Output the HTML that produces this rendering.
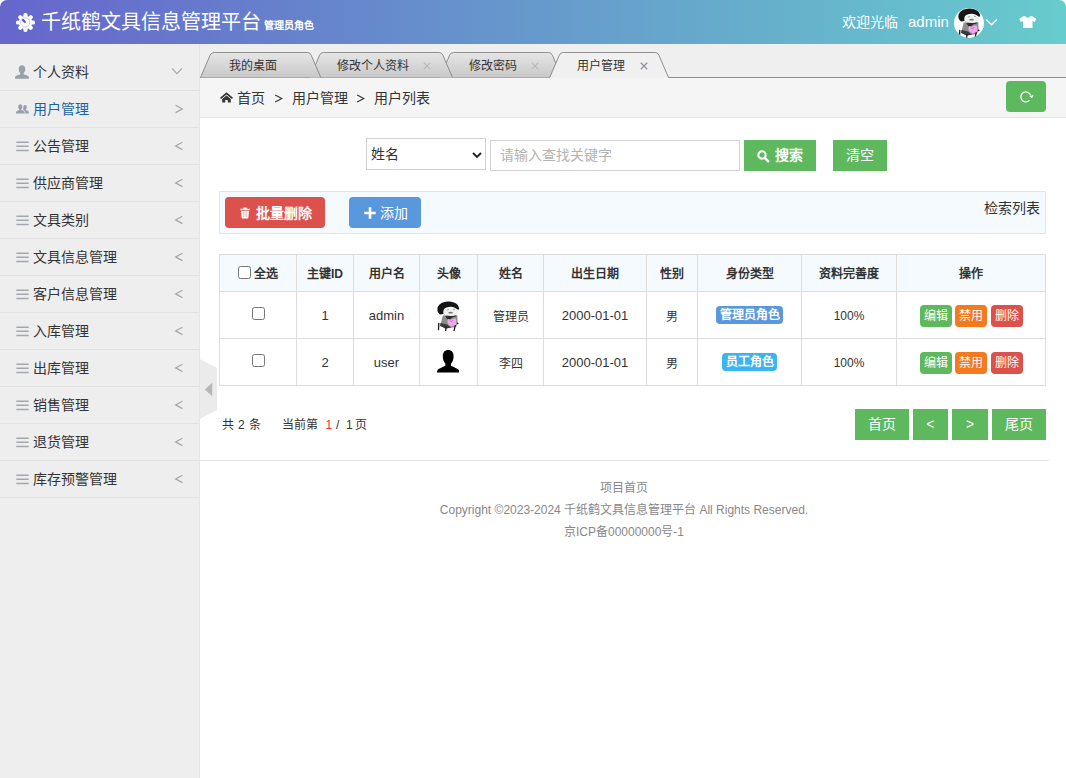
<!DOCTYPE html>
<html lang="zh-CN">
<head>
<meta charset="utf-8">
<title>千纸鹤文具信息管理平台</title>
<style>
*{box-sizing:border-box;margin:0;padding:0}
html,body{width:1066px;height:778px;overflow:hidden;background:#fff}
body{font-family:"Liberation Sans",sans-serif;font-size:14px;color:#333;position:relative}
.abs{position:absolute}
#win{position:absolute;left:0;top:0;width:1066px;height:778px;border-radius:7px 7px 0 0;overflow:hidden;background:#fff}
#hdr{position:absolute;left:0;top:0;width:1066px;height:44px;background:linear-gradient(90deg,#6666cc 0%,#66cccc 100%);color:#fff}
#title{position:absolute;left:41px;top:9px;font-family:"Liberation Serif",serif;font-size:20px;line-height:26px;white-space:nowrap;color:#fff}
#role{position:absolute;left:264px;top:19px;font-size:10px;line-height:14px;font-weight:bold;white-space:nowrap}
#welcome{position:absolute;left:842px;top:12px;font-size:14px;line-height:20px;white-space:nowrap}
#uname{position:absolute;left:908px;top:12px;font-size:15px;line-height:20px;white-space:nowrap}
#side{position:absolute;left:0;top:44px;width:200px;height:734px;background:#eee;border-right:1px solid #e5e5e5}
#menu{position:absolute;left:0;top:10px;width:199px;list-style:none}
#menu li{height:37px;border-bottom:1px solid #e2e2e2;position:relative;font-size:14px;line-height:36px;padding-left:33px;color:#333;white-space:nowrap}
#menu li.on{color:#1562ab}
#menu li .ic{position:absolute}
#main{position:absolute;left:200px;top:44px;width:866px;height:734px;background:#fff}
#tabbar{position:absolute;left:0;top:0;width:866px;height:34px;background:#efeff0}
#crumb{position:absolute;left:0;top:34px;width:866px;height:40px;background:#f5f5f5;border-bottom:1px solid #e5e5e5;font-size:14px;line-height:40px;white-space:nowrap}
.tabtxt{position:absolute;top:14px;font-size:12px;line-height:16px;color:#333;white-space:nowrap}
.btn{position:absolute;color:#fff;text-align:center;white-space:nowrap}
.g{background:#5eb95e}
table{border-collapse:collapse;position:absolute;left:19px;top:210px;width:826px;table-layout:fixed;font-size:12px;color:#333}
th,td{border:1px solid #ddd;text-align:center;vertical-align:middle;padding:0}
th{height:37px;background:#f5fafe;font-weight:bold;padding-bottom:1px}
td{height:47px}
.lbl{display:inline-block;color:#fff;font-weight:bold;font-size:12px;line-height:18px;height:18px;padding:0 3.6px;border-radius:4px;position:relative;top:0}
.ob{display:inline-block;color:#fff;font-size:12px;line-height:22px;width:32px;height:22px;border-radius:4px;margin:1px 0 0 0}
.ob+.ob{margin-left:3px}
.ob+.ob+.ob{margin-left:4px}
.cb{display:inline-block;width:13px;height:13px;border:1px solid #767676;border-radius:2.5px;background:#fff;vertical-align:middle}
.ft{position:absolute;left:0;width:848px;text-align:center;font-size:12px;color:#888;line-height:18px;white-space:nowrap}
.pg{position:absolute;top:371.5px;font-size:12px;line-height:18px;white-space:nowrap;color:#333}
</style>
</head>
<body>
<div id="win">
<svg width="0" height="0" style="position:absolute"><defs>
    <symbol id="av" viewBox="0 0 30 30">
      <rect width="30" height="30" fill="#fff"/>
      <path d="M9.8 14.6 L24.3 14.3 L24.6 22 L23 26 L12 27.5 L7.4 24 Z" fill="#8c8c8c"/>
      <path d="M7.5 22 L14 23.5 L18 26.8 L12.5 27.5 L7 25Z" fill="#3a3a3a"/>
      <path d="M12 15 L15.5 19.5 L19 16.5 L22.5 15.5 L23.5 14.5 L12 14.5Z" fill="#2a2a2a"/>
      <path d="M14.5 18.8 Q15.5 17 17.5 19 Q19.5 16.8 23 17.6 L23.5 23 Q20 26.5 16.2 24.5 Q13.8 22 14.5 18.8Z" fill="#f2a6ee"/>
      <path d="M17 19.5 l1.5 1.5 l1.6 -1.8" stroke="#a060a8" stroke-width=".7" fill="none"/>
      <ellipse cx="18" cy="10.6" rx="7.2" ry="4.3" fill="#f1f1f1"/>
      <path d="M10.5 12.5 Q13 15.5 19 14.8 L12 15.2Z" fill="#bbb"/>
      <path d="M14.8 .6 C22 .2 26.3 4 26.2 8.5 L24.4 8.6 C22 6.5 19.5 5.6 17.6 5.8 C14.5 6 12 7 10.9 8.3 C10.2 10 10.3 11.5 10.5 12.9 L7 13.5 C5 12 4.2 10 4.4 8 C4.8 3.5 9 .9 14.8 .6Z" fill="#151515"/>
      <ellipse cx="17.6" cy="11.7" rx="2.3" ry=".9" fill="#777"/>
      <path d="M13.8 9.2 l2.2 -.8 M20 8.3 l2 .3" stroke="#888" stroke-width=".7"/>
      <path d="M5.8 22.4 L5.5 28.6 M13.1 26.4 L12.6 29.8 M22.2 24.7 L21 29.8" stroke="#1a1a1a" stroke-width="1.3" stroke-linecap="round"/>
      <circle cx="24.6" cy="22.4" r=".9" fill="#222"/>
    </symbol>
</defs></svg>
<div id="hdr">
  <svg class="abs" style="left:15.7px;top:13px" width="19" height="19" viewBox="0 0 19 19">
    <g fill="#fff">
      <circle cx="9.5" cy="9.5" r="6.6"/>
      <rect x="7.4" y="0" width="4.2" height="19" rx="1.9"/>
      <rect x="7.4" y="0" width="4.2" height="19" rx="1.9" transform="rotate(45 9.5 9.5)"/>
      <rect x="7.4" y="0" width="4.2" height="19" rx="1.9" transform="rotate(90 9.5 9.5)"/>
      <rect x="7.4" y="0" width="4.2" height="19" rx="1.9" transform="rotate(135 9.5 9.5)"/>
    </g>
    <circle cx="9.2" cy="9.4" r="4.6" fill="none" stroke="#9a9ac8" stroke-width=".5"/>
    <path d="M7 7 L8.7 8.8" stroke="#5c5cc0" stroke-width="2.4" stroke-linecap="round"/>
  </svg>
  <div id="title">千纸鹤文具信息管理平台</div>
  <div id="role">管理员角色</div>
  <div id="welcome">欢迎光临</div>
  <div id="uname">admin</div>
  <svg class="abs" style="left:954px;top:8px" width="30" height="30" viewBox="0 0 30 30">
    <defs><clipPath id="c1"><circle cx="15" cy="15" r="15"/></clipPath></defs>
    <g clip-path="url(#c1)"><use href="#av" width="30" height="30"/></g>
  </svg>
  <svg class="abs" style="left:985px;top:17.5px" width="13" height="9" viewBox="0 0 13 9"><path d="M1.2 1.5 L6.5 6.8 L11.8 1.5" fill="none" stroke="#fff" stroke-width="1.5"/></svg>
  <svg class="abs" style="left:1018.5px;top:15.7px" width="17.5" height="12.5" viewBox="0 0 17.5 12.5"><path d="M4.2 .2 L6.4 .2 Q8.75 3.2 11.1 .2 L13.3 .2 L17.3 3 L15.7 6 L13.5 5 L13.5 12.3 L4 12.3 L4 5 L1.8 6 L.2 3 Z" fill="#fff"/></svg>
</div>

<div id="side">
  <ul id="menu">
    <li><svg class="ic" style="left:15px;top:10.5px" width="14" height="14" viewBox="0 0 14 14"><path d="M7 .2 C9 .2 10.3 1.7 10.3 4 C10.3 6 9.5 7.5 8.6 8.2 L8.6 9.2 C10.5 9.9 13.2 10.6 13.8 11.8 Q14 12.5 14 13.7 L0 13.7 Q0 12.5 .2 11.8 C.8 10.6 3.5 9.9 5.4 9.2 L5.4 8.2 C4.5 7.5 3.7 6 3.7 4 C3.7 1.7 5 .2 7 .2Z" fill="#9aa0ab"/></svg>个人资料<svg class="abs" style="left:171px;top:13px" width="12" height="9" viewBox="0 0 12 9"><path d="M1 1.4 L6 6.6 L11 1.4" fill="none" stroke="#a4a8ae" stroke-width="1.2"/></svg></li>
    <li class="on"><svg class="ic" style="left:15.5px;top:12.5px" width="13" height="10" viewBox="0 0 13 10"><path d="M4.3 .3 C5.6 .3 6.4 1.3 6.4 2.8 C6.4 4 5.9 5 5.3 5.5 L5.3 6.1 C6.5 6.5 8.2 7 8.5 7.8 Q8.7 8.5 8.7 9.5 L0 9.5 Q0 8.5 .2 7.8 C.5 7 2.1 6.5 3.3 6.1 L3.3 5.5 C2.7 5 2.2 4 2.2 2.8 C2.2 1.3 3 .3 4.3 .3Z" fill="#9aa0ab"/><path d="M9 .9 C10.1 .9 10.8 1.8 10.8 3 C10.8 4.1 10.4 4.9 9.9 5.4 L9.9 5.9 C10.9 6.3 12.4 6.7 12.7 7.5 Q12.9 8.2 12.9 9.5 L9.3 9.5 Q9.3 8 9 7.4 C8.7 6.8 7.6 6.3 7 6 C7.3 5.3 7.4 4.5 7.3 3.5 C7.2 2 7.8 .9 9 .9Z" fill="#9aa0ab"/></svg>用户管理<svg class="abs" style="left:174px;top:13px" width="10" height="10" viewBox="0 0 10 10"><path d="M1.6 1.2 L8.4 4.9 L1.6 8.6" fill="none" stroke="#a4a8ae" stroke-width="1.2"/></svg></li>
    <li><svg class="ic" style="left:15.5px;top:12.5px" width="13" height="11" viewBox="0 0 13 11"><path d="M.3 1.2h12.4M.3 5.3h12.4M.3 9.5h12.4" stroke="#a3a8b0" stroke-width="1.5"/></svg>公告管理<svg class="abs" style="left:174px;top:13px" width="10" height="10" viewBox="0 0 10 10"><path d="M8.4 1.2 L1.6 4.9 L8.4 8.6" fill="none" stroke="#a4a8ae" stroke-width="1.2"/></svg></li>
    <li><svg class="ic" style="left:15.5px;top:12.5px" width="13" height="11" viewBox="0 0 13 11"><path d="M.3 1.2h12.4M.3 5.3h12.4M.3 9.5h12.4" stroke="#a3a8b0" stroke-width="1.5"/></svg>供应商管理<svg class="abs" style="left:174px;top:13px" width="10" height="10" viewBox="0 0 10 10"><path d="M8.4 1.2 L1.6 4.9 L8.4 8.6" fill="none" stroke="#a4a8ae" stroke-width="1.2"/></svg></li>
    <li><svg class="ic" style="left:15.5px;top:12.5px" width="13" height="11" viewBox="0 0 13 11"><path d="M.3 1.2h12.4M.3 5.3h12.4M.3 9.5h12.4" stroke="#a3a8b0" stroke-width="1.5"/></svg>文具类别<svg class="abs" style="left:174px;top:13px" width="10" height="10" viewBox="0 0 10 10"><path d="M8.4 1.2 L1.6 4.9 L8.4 8.6" fill="none" stroke="#a4a8ae" stroke-width="1.2"/></svg></li>
    <li><svg class="ic" style="left:15.5px;top:12.5px" width="13" height="11" viewBox="0 0 13 11"><path d="M.3 1.2h12.4M.3 5.3h12.4M.3 9.5h12.4" stroke="#a3a8b0" stroke-width="1.5"/></svg>文具信息管理<svg class="abs" style="left:174px;top:13px" width="10" height="10" viewBox="0 0 10 10"><path d="M8.4 1.2 L1.6 4.9 L8.4 8.6" fill="none" stroke="#a4a8ae" stroke-width="1.2"/></svg></li>
    <li><svg class="ic" style="left:15.5px;top:12.5px" width="13" height="11" viewBox="0 0 13 11"><path d="M.3 1.2h12.4M.3 5.3h12.4M.3 9.5h12.4" stroke="#a3a8b0" stroke-width="1.5"/></svg>客户信息管理<svg class="abs" style="left:174px;top:13px" width="10" height="10" viewBox="0 0 10 10"><path d="M8.4 1.2 L1.6 4.9 L8.4 8.6" fill="none" stroke="#a4a8ae" stroke-width="1.2"/></svg></li>
    <li><svg class="ic" style="left:15.5px;top:12.5px" width="13" height="11" viewBox="0 0 13 11"><path d="M.3 1.2h12.4M.3 5.3h12.4M.3 9.5h12.4" stroke="#a3a8b0" stroke-width="1.5"/></svg>入库管理<svg class="abs" style="left:174px;top:13px" width="10" height="10" viewBox="0 0 10 10"><path d="M8.4 1.2 L1.6 4.9 L8.4 8.6" fill="none" stroke="#a4a8ae" stroke-width="1.2"/></svg></li>
    <li><svg class="ic" style="left:15.5px;top:12.5px" width="13" height="11" viewBox="0 0 13 11"><path d="M.3 1.2h12.4M.3 5.3h12.4M.3 9.5h12.4" stroke="#a3a8b0" stroke-width="1.5"/></svg>出库管理<svg class="abs" style="left:174px;top:13px" width="10" height="10" viewBox="0 0 10 10"><path d="M8.4 1.2 L1.6 4.9 L8.4 8.6" fill="none" stroke="#a4a8ae" stroke-width="1.2"/></svg></li>
    <li><svg class="ic" style="left:15.5px;top:12.5px" width="13" height="11" viewBox="0 0 13 11"><path d="M.3 1.2h12.4M.3 5.3h12.4M.3 9.5h12.4" stroke="#a3a8b0" stroke-width="1.5"/></svg>销售管理<svg class="abs" style="left:174px;top:13px" width="10" height="10" viewBox="0 0 10 10"><path d="M8.4 1.2 L1.6 4.9 L8.4 8.6" fill="none" stroke="#a4a8ae" stroke-width="1.2"/></svg></li>
    <li><svg class="ic" style="left:15.5px;top:12.5px" width="13" height="11" viewBox="0 0 13 11"><path d="M.3 1.2h12.4M.3 5.3h12.4M.3 9.5h12.4" stroke="#a3a8b0" stroke-width="1.5"/></svg>退货管理<svg class="abs" style="left:174px;top:13px" width="10" height="10" viewBox="0 0 10 10"><path d="M8.4 1.2 L1.6 4.9 L8.4 8.6" fill="none" stroke="#a4a8ae" stroke-width="1.2"/></svg></li>
    <li><svg class="ic" style="left:15.5px;top:12.5px" width="13" height="11" viewBox="0 0 13 11"><path d="M.3 1.2h12.4M.3 5.3h12.4M.3 9.5h12.4" stroke="#a3a8b0" stroke-width="1.5"/></svg>库存预警管理<svg class="abs" style="left:174px;top:13px" width="10" height="10" viewBox="0 0 10 10"><path d="M8.4 1.2 L1.6 4.9 L8.4 8.6" fill="none" stroke="#a4a8ae" stroke-width="1.2"/></svg></li>
  </ul>
</div>

<div id="main">
  <div id="tabbar">
    <svg class="abs" style="left:0;top:0" width="866" height="35" viewBox="0 0 866 35">
      <defs>
        <linearGradient id="tg" x1="0" y1="0" x2="0" y2="1"><stop offset="0" stop-color="#e6e6e6"/><stop offset="1" stop-color="#c8c8c8"/></linearGradient>
      </defs>
      <path d="M0 33.5 H866" stroke="#8e8e8e" stroke-width="1"/>
      <path d="M240 33.5 L249.6 11.2 Q250.6 8.5 253.6 8.5 H348.4 Q351.4 8.5 352.4 11.2 L362 33.5" fill="url(#tg)" stroke="#8e8e8e"/>
      <path d="M110 33.5 L119.6 11.2 Q120.6 8.5 123.6 8.5 H238.9 Q241.9 8.5 242.9 11.2 L252.5 33.5" fill="url(#tg)" stroke="#8e8e8e"/>
      <path d="M0.5 33.5 L10.1 11.2 Q11.1 8.5 14.1 8.5 H107.2 Q110.2 8.5 111.2 11.2 L120.8 33.5" fill="url(#tg)" stroke="#8e8e8e"/>
      <path d="M349.7 34.2 L359.3 11.2 Q360.3 8.5 363.3 8.5 H454.9 Q457.9 8.5 458.9 11.2 L468.5 34.2Z" fill="#f0f0f0" stroke="none"/>
      <path d="M349.7 33.5 L359.3 11.2 Q360.3 8.5 363.3 8.5 H454.9 Q457.9 8.5 458.9 11.2 L468.5 33.5" fill="none" stroke="#8e8e8e"/>
    </svg>
    <div class="tabtxt" style="left:29px">我的桌面</div>
    <div class="tabtxt" style="left:137px">修改个人资料</div>
    <div class="tabtxt" style="left:269px">修改密码</div>
    <div class="tabtxt" style="left:377px">用户管理</div>
    <svg class="abs" style="left:223px;top:18px" width="8" height="8" viewBox="0 0 8 8"><path d="M.8 .8 L7.2 7.2 M7.2 .8 L.8 7.2" stroke="#b4b8be" stroke-width="1.1"/></svg>
    <svg class="abs" style="left:331px;top:18px" width="8" height="8" viewBox="0 0 8 8"><path d="M.8 .8 L7.2 7.2 M7.2 .8 L.8 7.2" stroke="#b4b8be" stroke-width="1.1"/></svg>
    <svg class="abs" style="left:439.5px;top:18px" width="8" height="8" viewBox="0 0 8 8"><path d="M.8 .8 L7.2 7.2 M7.2 .8 L.8 7.2" stroke="#8f949c" stroke-width="1.3"/></svg>
  </div>
  <div id="crumb">
    <svg class="abs" style="left:19.8px;top:14.4px" width="13" height="11" viewBox="0 0 13 11"><path d="M6.5 .2 L0 5.7 L1.1 7 L6.5 2.5 L11.9 7 L13 5.7Z" fill="#333"/><path d="M2.2 7.1 L6.5 3.6 L10.8 7.1 V10.6 H7.8 V7.9 H5.2 V10.6 H2.2Z" fill="#333"/></svg>
    <span class="abs" style="left:37px;top:0">首页</span>
    <svg class="abs" style="left:274px;top:0;left:74px" width="9" height="40" viewBox="0 0 9 40"><path d="M1.2 17 L7.8 20.5 L1.2 24" fill="none" stroke="#333" stroke-width="1.1"/></svg>
    <span class="abs" style="left:92px;top:0">用户管理</span>
    <svg class="abs" style="left:156px;top:0" width="9" height="40" viewBox="0 0 9 40"><path d="M1.2 17 L7.8 20.5 L1.2 24" fill="none" stroke="#333" stroke-width="1.1"/></svg>
    <span class="abs" style="left:174px;top:0">用户列表</span>
    <div class="btn g" style="left:806px;top:3px;width:40px;height:31px;border-radius:4px">
      <svg class="abs" style="left:12.5px;top:9px" width="15" height="14" viewBox="0 0 15 14"><path d="M10.4 10.4 A5 5 0 1 1 11.6 5.4" fill="none" stroke="#fff" stroke-width="1.3"/><path d="M10.3 6.3 L14.4 4.9 L13.1 8.2Z" fill="#fff"/></svg>
    </div>
  </div>

  <!-- search -->
  <div class="abs" style="left:166px;top:94px;width:120px;height:32px;border:1px solid #d3d3d3;background:#fff;font-size:14px;line-height:30px;padding-left:4px">姓名
    <svg class="abs" style="left:105px;top:12.5px" width="10" height="7" viewBox="0 0 10 7"><path d="M1 1 L5 5 L9 1" fill="none" stroke="#222" stroke-width="1.9"/></svg>
  </div>
  <div class="abs" style="left:290px;top:96px;width:250px;height:31px;border:1px solid #d3d3d3;background:#fff;font-size:14px;line-height:29px;padding-left:9px;color:#b3b3b3">请输入查找关键字</div>
  <div class="btn g" style="left:544px;top:96px;width:72px;height:31px;font-size:14px;line-height:31px;font-weight:bold;padding-left:17.5px">
    <svg class="abs" style="left:13.2px;top:9.6px" width="13" height="13" viewBox="0 0 13 13"><circle cx="5" cy="5" r="3.7" fill="none" stroke="#fff" stroke-width="2.1"/><path d="M7.8 7.8 L11.3 11.3" stroke="#fff" stroke-width="2.4" stroke-linecap="round"/></svg>搜索</div>
  <div class="btn g" style="left:633px;top:96px;width:54px;height:31px;font-size:14px;line-height:31px">清空</div>

  <!-- toolbar -->
  <div class="abs" style="left:19px;top:147px;width:827px;height:43px;background:#f5fafe;border:1px solid #e5e5e5"></div>
  <div class="btn" style="left:25px;top:153px;width:100px;height:31px;border-radius:4px;background:#dd514c;font-size:14px;line-height:32px;font-weight:bold;padding-left:18px">
    <svg class="abs" style="left:14.5px;top:10px" width="10" height="12" viewBox="0 0 10 12"><path d="M.3 1.8 H9.7 V3.2 H.3Z M3.2 .4 H6.8 V1.8 H3.2Z M1 3.9 H9 L8.4 10.6 Q8.3 11.6 7.3 11.6 H2.7 Q1.7 11.6 1.6 10.6Z" fill="#fff"/><path d="M3.5 5 V10 M5 5 V10 M6.5 5 V10" stroke="#dd514c" stroke-width=".45" opacity=".7"/></svg>批量删除</div>
  <div class="btn" style="left:149px;top:153px;width:72px;height:31px;border-radius:4px;background:#5a98de;font-size:14px;line-height:32px;padding-left:18px">
    <svg class="abs" style="left:14.5px;top:10px" width="12" height="12" viewBox="0 0 12 12"><path d="M6 .3 V11.7 M.3 6 H11.7" stroke="#fff" stroke-width="2.6"/></svg>添加</div>
  <div class="abs" style="left:784px;top:155px;font-size:14px;line-height:18px;white-space:nowrap;color:#333">检索列表</div>

  <table>
    <colgroup><col style="width:77px"><col style="width:57px"><col style="width:66px"><col style="width:58px"><col style="width:66px"><col style="width:103px"><col style="width:51px"><col style="width:104px"><col style="width:95px"><col style="width:149px"></colgroup>
    <tr><th><span class="cb" style="margin-right:3px;position:relative;top:-2px"></span>全选</th><th>主键ID</th><th>用户名</th><th>头像</th><th>姓名</th><th>出生日期</th><th>性别</th><th>身份类型</th><th>资料完善度</th><th>操作</th></tr>
    <tr><td><span class="cb" style="position:relative;top:-2px"></span></td><td style="font-size:13px">1</td><td style="font-size:13px">admin</td><td>
      <svg width="30" height="30" viewBox="0 0 30 30" style="display:block;margin:1px auto 0;position:relative;left:-.5px"><use href="#av" width="30" height="30"/></svg></td><td>管理员</td><td style="font-size:13px">2000-01-01</td><td>男</td><td><span class="lbl" style="background:#5a98de">管理员角色</span></td><td><span style="position:relative;top:1px">100%</span></td><td><span class="ob" style="background:#5eb95e">编辑</span><span class="ob" style="background:#f37b1d">禁用</span><span class="ob" style="background:#dd514c">删除</span></td></tr>
    <tr><td><span class="cb" style="position:relative;top:-2px"></span></td><td style="font-size:13px">2</td><td style="font-size:13px">user</td><td>
      <svg width="22.4" height="22.6" viewBox="0 0 22.4 22.6" style="display:block;margin:0 auto;position:relative;top:-.5px;left:-.5px"><path d="M11.2 0 C14.5 0 16.6 2.3 16.6 5.8 C16.6 7 16.5 8 16.3 9 C15.9 11.2 15 12.7 14 13.7 L14 15.5 C14.3 16.5 20 18 21.6 19.7 Q22.4 20.6 22.4 22.6 L0 22.6 Q0 20.6 .8 19.7 C2.4 18 8.1 16.5 8.4 15.5 L8.4 13.7 C7.4 12.7 6.5 11.2 6.1 9 C5.9 8 5.8 7 5.8 5.8 C5.8 2.3 7.9 0 11.2 0Z" fill="#000"/></svg></td><td>李四</td><td style="font-size:13px">2000-01-01</td><td>男</td><td><span class="lbl" style="background:#3bb4f2">员工角色</span></td><td><span style="position:relative;top:1px">100%</span></td><td><span class="ob" style="background:#5eb95e">编辑</span><span class="ob" style="background:#f37b1d">禁用</span><span class="ob" style="background:#dd514c">删除</span></td></tr>
  </table>

  <!-- collapse handle -->
  <svg class="abs" style="left:0;top:315px" width="17" height="60" viewBox="0 0 17 60"><path d="M0 0 L17 9 V51 L0 60Z" fill="#ebebeb"/><path d="M4.8 30.5 L12.2 23.7 V37.3Z" fill="#b7b7b7"/></svg>

  <!-- pager -->
  <span class="pg" style="left:22px">共</span><span class="pg" style="left:38px">2</span><span class="pg" style="left:48.5px">条</span>
  <span class="pg" style="left:82px">当前第</span><span class="pg" style="left:125.5px;color:#e33">1</span><span class="pg" style="left:136px">/</span><span class="pg" style="left:146px">1</span><span class="pg" style="left:155px">页</span>
  <div class="btn g" style="left:655px;top:365px;width:54px;height:31px;font-size:14px;line-height:31px">首页</div>
  <div class="btn g" style="left:712.5px;top:365px;width:35.5px;height:31px;font-size:14px;line-height:31px">&lt;</div>
  <div class="btn g" style="left:752px;top:365px;width:36px;height:31px;font-size:14px;line-height:31px">&gt;</div>
  <div class="btn g" style="left:792px;top:365px;width:54px;height:31px;font-size:14px;line-height:31px">尾页</div>

  <div class="abs" style="left:0;top:416px;width:849px;height:1px;background:#e5e5e5"></div>
  <div class="ft" style="top:435px">项目首页</div>
  <div class="ft" style="top:457px">Copyright ©2023-2024 千纸鹤文具信息管理平台 All Rights Reserved.</div>
  <div class="ft" style="top:479px">京ICP备00000000号-1</div>
</div>
</div>
</body>
</html>
